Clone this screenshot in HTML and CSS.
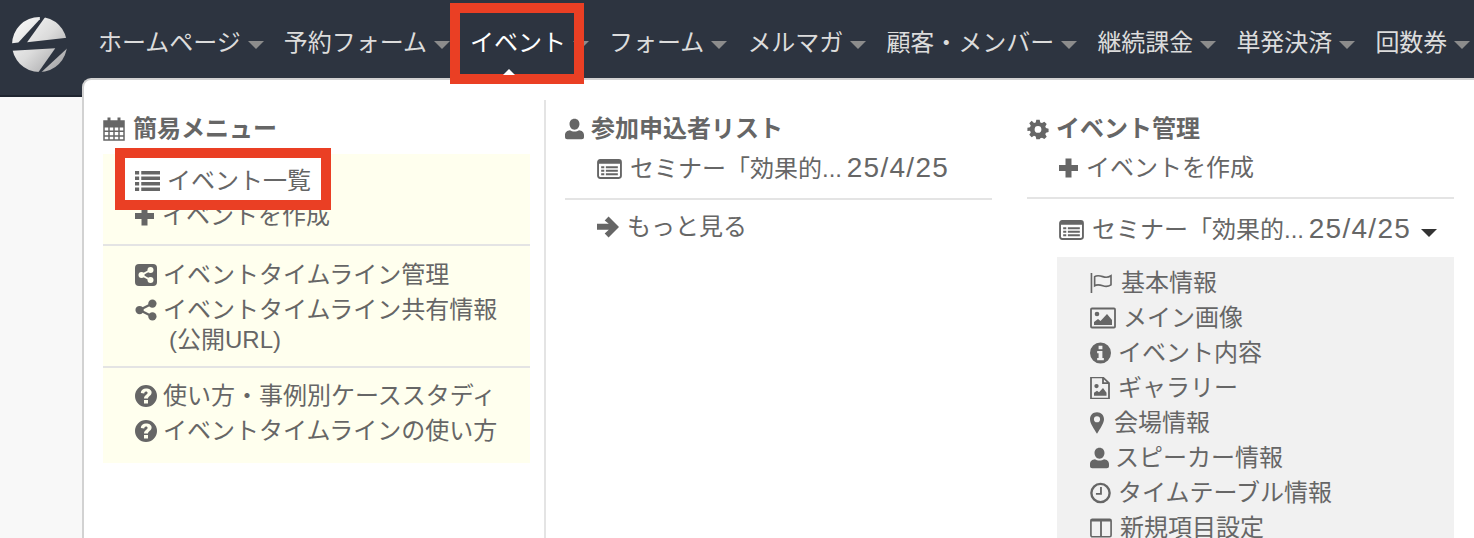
FILE: index.html
```html
<!DOCTYPE html>
<html lang="ja">
<head>
<meta charset="utf-8">
<title>イベント</title>
<link rel="stylesheet" href="styles.css">
</head>
<body>
<svg class="defs" width="0" height="0" aria-hidden="true">
  <defs>
    <symbol id="i-cal" viewBox="1 0.500 22 23.500" preserveAspectRatio="none"><path fill="none" stroke="currentColor" stroke-width="1.500" d="M2 4.500h20v18.500H2zM2 10h20M2 14.500h20M2 19h20M7 10v13M12 10v13M17 10v13"/><path fill="currentColor" d="M2 4.500h20V10H2zM5.500 1h3v6h-3zM15.500 1h3v6h-3z"/></symbol>
    <symbol id="i-list" viewBox="0 2 24 20" preserveAspectRatio="none"><path fill="currentColor" d="M0 3h4v3H0zM6 3h18v3H6zM0 8h4v3H0zM6 8h18v3H6zM0 13h4v3H0zM6 13h18v3H6zM0 18h4v3H0zM6 18h18v3H6z"/></symbol>
    <symbol id="i-plus" viewBox="2.500 2.500 19 19"><path fill="currentColor" d="M9 2.500h6V9h6.500v6H15v6.500H9V15H2.500V9H9z"/></symbol>
    <symbol id="i-sharesq" viewBox="1 1 22 22"><rect x="1" y="1" width="22" height="22" rx="4" fill="currentColor"/><g fill="#ffffee"><circle cx="16.500" cy="7" r="3"/><circle cx="7.500" cy="12" r="3"/><circle cx="16.500" cy="17" r="3"/></g><path fill="none" stroke="#ffffee" stroke-width="2" d="M16.500 7l-9 5 9 5"/></symbol>
    <symbol id="i-share" viewBox="0 0 24 24"><g fill="currentColor"><circle cx="19" cy="5" r="4.500"/><circle cx="5" cy="12" r="4.500"/><circle cx="19" cy="19" r="4.500"/></g><path stroke="currentColor" stroke-width="2.500" fill="none" d="M19 5L5 12l14 7"/></symbol>
    <symbol id="i-q" viewBox="1 1 22 22"><path fill="currentColor" fill-rule="evenodd" d="M12 1a11 11 0 1 1 0 22 11 11 0 0 1 0-22zM10 16v3.500h4V16zM12 4.500c-3 0-5 1.600-5.200 4.500l3.400.5c.2-1.300.7-2 1.800-2 1 0 1.600.6 1.600 1.400 0 1.700-3.600 2.200-3.600 5.600h4c0-2.300 3.600-2.700 3.600-6 0-2.500-2.400-4-5.600-4z"/></symbol>
    <symbol id="i-user" viewBox="1.500 1 21 22.500"><path fill="currentColor" d="M12 1c3.300 0 5.500 2.500 5.500 5.700S15.300 13 12 13 6.500 9.900 6.500 6.700 8.700 1 12 1zM7 13.500c1.300 1 3 1.500 5 1.500s3.700-.5 5-1.500c3 .3 5.500 2 5.500 5.500v2c0 1.500-1 2.500-2.500 2.500H4c-1.500 0-2.500-1-2.500-2.500v-2c0-3.500 2.500-5.200 5.500-5.500z"/></symbol>
    <symbol id="i-listalt" viewBox="0 2.500 24 19" preserveAspectRatio="none"><rect x="1" y="3.500" width="22" height="17" rx="2" fill="none" stroke="currentColor" stroke-width="1.800"/><path fill="currentColor" d="M1 3.500h22V7H1zM4 9.500h3v1.800H4zM8.500 9.500H20v1.800H8.500zM4 12.800h3v1.800H4zM8.500 12.800H20v1.800H8.500zM4 16.100h3v1.800H4zM8.500 16.100H20v1.800H8.500z"/></symbol>
    <symbol id="i-arrow" viewBox="2 3 20 19"><path fill="currentColor" d="M12.500 3l9.500 9.500-9.500 9.500-3.500-3.500 3.700-3.500H2V9.500h10.700L9 6.500z"/></symbol>
    <symbol id="i-cog" viewBox="-1 -1 26 25"><path fill="currentColor" fill-rule="evenodd" d="M10 1h4l.7 3.200 2 .8 2.800-1.700 2.800 2.800-1.700 2.800.8 2 3.100.7v4l-3.100.7-.8 2 1.700 2.800-2.800 2.800-2.800-1.700-2 .8L14 24h-4l-.7-3.200-2-.8-2.800 1.700-2.800-2.800 1.700-2.800-.8-2L-.5 14.500v-4L2.600 9.800l.8-2-1.700-2.700 2.800-2.800L7.300 5l2-.8zM12 8.500a4 4 0 1 0 0 8 4 4 0 0 0 0-8z" transform="translate(0 -.5)"/></symbol>
    <symbol id="i-flag" viewBox="0 0 24 22"><path fill="none" stroke="currentColor" stroke-width="1.800" d="M1.500 0v22M5 4c3-2 6-1 9 0s6 1 9-1v10c-3 2-6 2-9 1s-6-2-9 0z"/></symbol>
    <symbol id="i-pic" viewBox="0 1.500 26 21"><rect x="1" y="2.500" width="24" height="19" rx="1" fill="none" stroke="currentColor" stroke-width="1.800"/><circle cx="7" cy="8" r="2.300" fill="currentColor"/><path fill="currentColor" d="M4 19v-3l4-3 2.500 2L17 8l5 6v5z"/></symbol>
    <symbol id="i-info" viewBox="1 1 22 22"><path fill="currentColor" fill-rule="evenodd" d="M12 1a11 11 0 1 1 0 22 11 11 0 0 1 0-22zM10 4.500v3.500h4V4.500zM8.500 10v2.300H10v5H8.500v2.200h7v-2.200H14V10z"/></symbol>
    <symbol id="i-file" viewBox="2 0.500 20 23" preserveAspectRatio="none"><path fill="none" stroke="currentColor" stroke-width="1.800" d="M3 1h12l6 6v16H3zM15 1v6h6"/><circle cx="8.500" cy="10" r="2.200" fill="currentColor"/><path fill="currentColor" d="M6 20v-3l3-2 2 1.500 4-4.500 3.500 5v3z"/></symbol>
    <symbol id="i-pin" viewBox="4.500 1 15 23"><path fill="currentColor" fill-rule="evenodd" d="M12 1c4.500 0 7.500 3.200 7.500 7.500S15 19 12 24C9 19 4.500 13 4.500 8.500S7.500 1 12 1zm0 4.200a3.300 3.300 0 1 0 0 6.600 3.300 3.300 0 0 0 0-6.600z"/></symbol>
    <symbol id="i-clock" viewBox="0.500 0.500 23 23"><circle cx="12" cy="12" r="10" fill="none" stroke="currentColor" stroke-width="2.600"/><path fill="none" stroke="currentColor" stroke-width="2" d="M12.500 5.500v7.500H7"/></symbol>
    <symbol id="i-cols" viewBox="0 1.500 24 21"><rect x="1" y="2.500" width="22" height="19" rx="1.500" fill="none" stroke="currentColor" stroke-width="1.800"/><path fill="currentColor" d="M1 2.500h22v2.500H1zM11 4h2v17h-2z"/></symbol>
  </defs>
</svg>

<header class="navbar">
  <svg class="logo" viewBox="23 25 164 164" aria-label="ロゴ">
    <defs>
      <linearGradient id="lg" gradientUnits="userSpaceOnUse" x1="40" y1="40" x2="170" y2="170">
        <stop offset="0" stop-color="#f6f6f6"/>
        <stop offset="0.5" stop-color="#dcdcdc"/>
        <stop offset="1" stop-color="#a8a8aa"/>
      </linearGradient>
      <clipPath id="lc"><circle cx="105" cy="107" r="82"/></clipPath>
    </defs>
    <g clip-path="url(#lc)" fill="url(#lg)">
      <polygon points="106,20 15,20 15,104 42,101 106,32"/>
      <polygon points="122,25 68,100 192,86 192,25"/>
      <polygon points="20,126 152,118 100,192 20,192"/>
      <polygon points="190,116 108,192 192,192"/>
    </g>
  </svg>
  <nav class="nav-items">
    <a class="nav-item">ホームページ<i class="caret"></i></a>
    <a class="nav-item">予約フォーム<i class="caret"></i></a>
    <a class="nav-item active">イベント<i class="caret"></i></a>
    <a class="nav-item">フォーム<i class="caret"></i></a>
    <a class="nav-item">メルマガ<i class="caret"></i></a>
    <a class="nav-item">顧客・メンバー<i class="caret"></i></a>
    <a class="nav-item">継続課金<i class="caret"></i></a>
    <a class="nav-item">単発決済<i class="caret"></i></a>
    <a class="nav-item">回数券<i class="caret"></i></a>
  </nav>
</header>

<section class="dropdown">
  <div class="col col-1">
    <h3 class="col-title"><svg class="ic h24"><use href="#i-cal"/></svg>簡易メニュー</h3>
    <div class="quick">
      <ul class="rows">
        <li class="row marked"><svg class="ic w25"><use href="#i-list"/></svg>イベント一覧</li>
        <li class="row"><svg class="ic w19"><use href="#i-plus"/></svg>イベントを作成</li>
      </ul>
      <hr class="rule first">
      <ul class="rows">
        <li class="row"><svg class="ic"><use href="#i-sharesq"/></svg>イベントタイムライン管理</li>
        <li class="row"><svg class="ic"><use href="#i-share"/></svg>イベントタイムライン共有情報<br><span class="indent">(公開URL)</span></li>
      </ul>
      <hr class="rule second">
      <ul class="rows">
        <li class="row"><svg class="ic"><use href="#i-q"/></svg>使い方・事例別ケーススタディ</li>
        <li class="row"><svg class="ic"><use href="#i-q"/></svg>イベントタイムラインの使い方</li>
      </ul>
    </div>
  </div>
  <div class="col col-2">
    <h3 class="col-title"><svg class="ic w19"><use href="#i-user"/></svg>参加申込者リスト</h3>
    <ul class="rows inset">
      <li class="row"><svg class="ic w25 h20"><use href="#i-listalt"/></svg>セミナー「効果的... <span class="date">25/4/25</span></li>
    </ul>
    <hr class="rule">
    <ul class="rows inset">
      <li class="row"><svg class="ic w22"><use href="#i-arrow"/></svg>もっと見る</li>
    </ul>
  </div>
  <div class="col col-3">
    <h3 class="col-title"><svg class="ic"><use href="#i-cog"/></svg>イベント管理</h3>
    <ul class="rows inset">
      <li class="row"><svg class="ic w19"><use href="#i-plus"/></svg>イベントを作成</li>
    </ul>
    <hr class="rule">
    <ul class="rows inset next">
      <li class="row"><svg class="ic w25 h20"><use href="#i-listalt"/></svg>セミナー「効果的... <span class="date">25/4/25</span><i class="caret dark"></i></li>
    </ul>
    <ul class="rows sub">
      <li class="row"><svg class="ic w22 h20 gap9"><use href="#i-flag"/></svg>基本情報</li>
      <li class="row"><svg class="ic w26"><use href="#i-pic"/></svg>メイン画像</li>
      <li class="row"><svg class="ic w21"><use href="#i-info"/></svg>イベント内容</li>
      <li class="row"><svg class="ic w20"><use href="#i-file"/></svg>ギャラリー</li>
      <li class="row"><svg class="ic w14"><use href="#i-pin"/></svg>会場情報</li>
      <li class="row"><svg class="ic w19"><use href="#i-user"/></svg>スピーカー情報</li>
      <li class="row"><svg class="ic w21"><use href="#i-clock"/></svg>タイムテーブル情報</li>
      <li class="row"><svg class="ic w22"><use href="#i-cols"/></svg>新規項目設定</li>
    </ul>
  </div>
</section>

<div class="mark-nav"></div>
</body>
</html>
```
FILE: styles.css
```css
*, *::before, *::after { box-sizing: border-box; }
html, body { height: 100%; }
body {
  margin: 0;
  overflow: hidden;
  background: #f8f8f8;
  color: #666;
  font-family: "Liberation Sans", "Noto Sans CJK JP", sans-serif;
  font-size: 24px;
}
.defs { position: absolute; }

.navbar {
  display: flex;
  align-items: flex-start;
  height: 97px;
  padding: 17px 0 0 12px;
  background: #2d3440;
  border-bottom: 2px solid #1f2530;
}
.logo { width: 55px; height: 55px; flex: none; }
.nav-items { display: flex; margin: 8px 0 0 31px; white-space: nowrap; }
.nav-item {
  display: flex;
  align-items: center;
  height: 36px;
  margin-right: 20px;
  color: #dcdcdc;
  line-height: 36px;
}
.nav-item.active { color: #fff; position: relative; }
.nav-item.active::after {
  content: "";
  position: absolute;
  left: 33px;
  top: 44px;
  width: 12px;
  height: 6px;
  border: 6px solid transparent;
  border-top: 0;
  border-bottom: 6px solid #fff;
  z-index: 3;
}
.caret {
  display: inline-block;
  flex: none;
  width: 16px;
  height: 8px;
  margin: 3px 0 0 7px;
  border-left: 8px solid transparent;
  border-right: 8px solid transparent;
  border-top: 8px solid #8c8c8c;
}
.caret.dark { border-top-color: #333; margin: 0 0 0 10px; vertical-align: 1px; }

.dropdown {
  position: absolute;
  left: 82px;
  top: 78px;
  right: 0;
  bottom: 0;
  display: grid;
  grid-template-columns: 462px 462px 427px;
  padding: 20px 0 0 19px;
  background: #fff;
  border: 2px solid #d2d2d2;
  border-width: 2px 0 0 2px;
  border-radius: 9px 0 0 0;
  overflow: hidden;
}
.col { padding-top: 12px; }
.col-1 { width: 443px; padding-right: 14px; border-right: 2px solid #e4e4e4; }
.col-2 { width: 427px; }

.col-title {
  display: flex;
  align-items: center;
  height: 34px;
  margin: 0;
  font-size: 24px;
  font-weight: 700;
  line-height: 34px;
  color: #666;
}
.col-title .ic { margin-right: 7px; }
.col-1 .col-title .ic { margin-right: 8px; }

.rows { list-style: none; margin: 0; padding: 0; }
.row { padding: 2.500px 0; line-height: 30px; white-space: nowrap; }
.indent { margin-left: 34px; }
.date { margin-left: -2px; font-size: 28px; letter-spacing: 1.300px; line-height: 30px; }

.ic {
  display: inline-block;
  width: 22px;
  height: 22px;
  margin-right: 7px;
  vertical-align: -3px;
  color: #666;
}
.w14 { width: 14px; margin-right: 10px; }
.w19 { width: 19px; margin-right: 8px; }
.w20 { width: 20px; margin-right: 8px; }
.w21 { width: 21px; margin-right: 7px; }
.w22 { width: 22px; margin-right: 8px; }
.w25 { width: 25px; margin-right: 8px; }
.w26 { width: 26px; margin-right: 7px; }
.h20 { height: 20px; vertical-align: -2px; }
.h24 { height: 24px; }
.gap9 { margin-right: 9px; }
.sub .w19 { margin-right: 6px; }

.quick { margin-top: 8px; padding: 9px 0 14.500px; background: #ffffee; }
.quick .rows { padding-left: 32px; }
.quick .ic { margin-right: 6px; }
.quick .w25 { margin-right: 7px; }
.quick .w19 { margin-right: 8px; }
.col-2 .rows:first-of-type, .col-3 .rows:first-of-type { margin-top: 4.500px; }
.rule { height: 2px; margin: 11px 0 10px; border: 0; background: #e4e4e4; }
.rule.first { margin: 11px 0 11px; }
.rule.second { margin: 9px 0 10.500px; }
.inset { padding-left: 32px; }
.next { padding-top: 3px; }
.sub { height: 300px; margin: 9.500px 0 0 30px; padding: 8.500px 0 0 33px; background: #f1f1f1; }

/* callouts drawn over the screenshot */
.mark-nav {
  position: absolute;
  left: 450px;
  top: 3px;
  width: 134px;
  height: 81px;
  border: 10px solid #ea3f24;
  z-index: 2;
}
.marked { position: relative; z-index: 1; }
.marked::before {
  content: "";
  position: absolute;
  left: -20px;
  top: -15px;
  width: 216px;
  height: 62px;
  background: #fff;
  border: 10px solid #ea3f24;
  z-index: -1;
}
```
